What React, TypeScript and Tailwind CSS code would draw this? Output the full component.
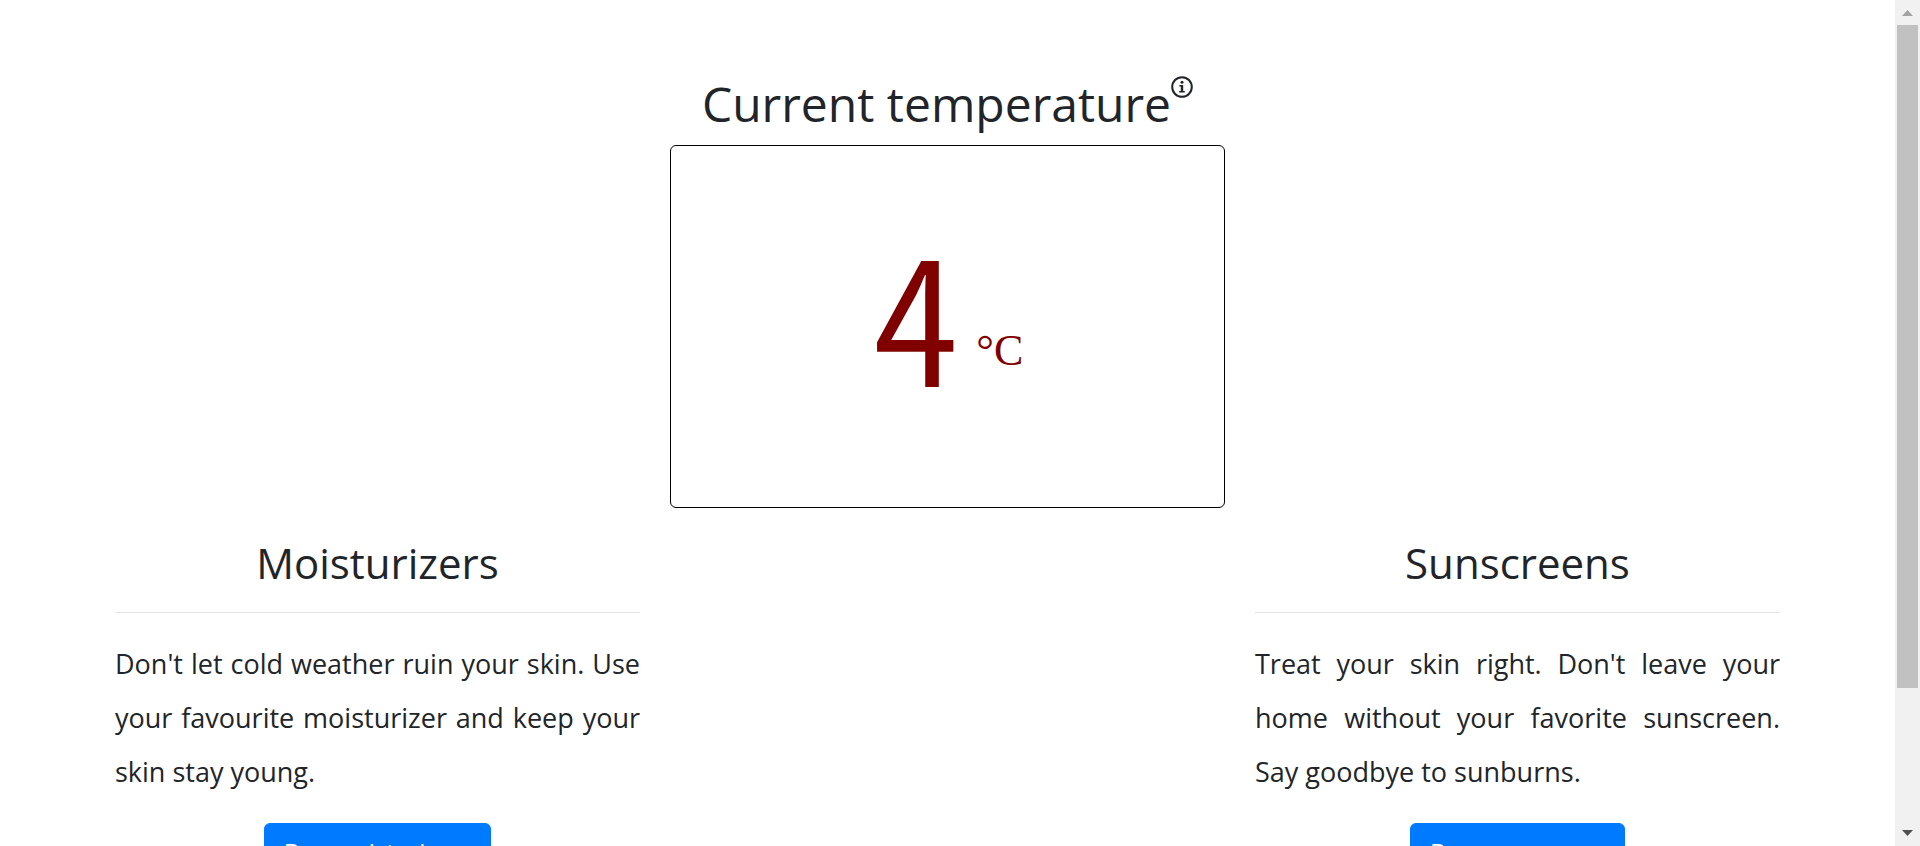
interface ProductProps {
  title: string;
  text: string;
  action: string;
}

function Product({ title, text, action }: ProductProps) {
  return (
    <section className="flex flex-col items-center px-[15px]">
      <h2 className="text-[42px] leading-[50px]">{title}</h2>
      <hr className="my-6 w-full border-[#e5e5e5]" />
      <p className="mb-6 w-full text-justify text-[27px] leading-[54px]">{text}</p>
      <button
        type="button"
        className="rounded-md border border-[#007bff] bg-[#007bff] px-[19px] py-2.5 text-2xl leading-9 text-white"
      >
        {action}
      </button>
    </section>
  );
}

function InfoIcon() {
  return (
    <svg className="mt-px h-[22px] w-[22px]" viewBox="1 1 22 22" fill="none" aria-hidden="true">
      <circle cx="12" cy="12" r="9.8" stroke="currentColor" strokeWidth="2" />
      <circle cx="12" cy="7.2" r="1.5" fill="currentColor" />
      <path d="M9.4 10H13.2V16h1.6v1.5H9.2V16h1.6v-4.5H9.4z" fill="currentColor" />
    </svg>
  );
}

function ScrollBar() {
  return (
    <div className="flex w-[25px] shrink-0 flex-col items-center bg-[#f1f1f1]" aria-hidden="true">
      <svg className="h-[25px] w-[25px] shrink-0" viewBox="0 0 25 25">
        <path d="M7 16h11l-5.5-6z" fill="#a3a3a3" />
      </svg>
      <div className="h-5/6 w-[21px]">
        <div className="h-[94%] bg-[#c1c1c1]" />
      </div>
      <svg className="mt-auto h-[25px] w-[25px] shrink-0" viewBox="0 0 25 25">
        <path d="M7 9h11l-5.5 6z" fill="#505050" />
      </svg>
    </div>
  );
}

export default function App() {
  return (
    <div className="flex h-screen overflow-hidden bg-white font-['Open_Sans',sans-serif] text-[#212529]">
      <main className="min-w-0 flex-1 overflow-hidden px-[100px] pt-[75px]">
        <div className="grid grid-cols-3 gap-x-[15px]">
          <section className="col-start-2 flex flex-col">
            <h1 className="flex justify-center text-[48px] leading-[58px]">
              Current temperature
              <InfoIcon />
            </h1>
            <div className="mt-3 flex h-[363px] items-center justify-center rounded-md border border-black text-[#800000]">
              <p className="flex items-center gap-4">
                <span className="pb-8 font-['Noto_Sans_CJK_SC',sans-serif] text-[177px] leading-none font-[350] [font-feature-settings:'hwid']">
                  4
                </span>
                <span className="pt-12 font-['Liberation_Serif',serif] text-[44px] leading-none">°C</span>
              </p>
            </div>
          </section>
        </div>
        <div className="mt-[30px] grid grid-cols-3 gap-x-[15px]">
          <Product
            title="Moisturizers"
            text="Don't let cold weather ruin your skin. Use your favourite moisturizer and keep your skin stay young."
            action="Buy moisturizers"
          />
          <div />
          <Product
            title="Sunscreens"
            text="Treat your skin right. Don't leave your home without your favorite sunscreen. Say goodbye to sunburns."
            action="Buy sunscreens"
          />
        </div>
      </main>
      <ScrollBar />
    </div>
  );
}
